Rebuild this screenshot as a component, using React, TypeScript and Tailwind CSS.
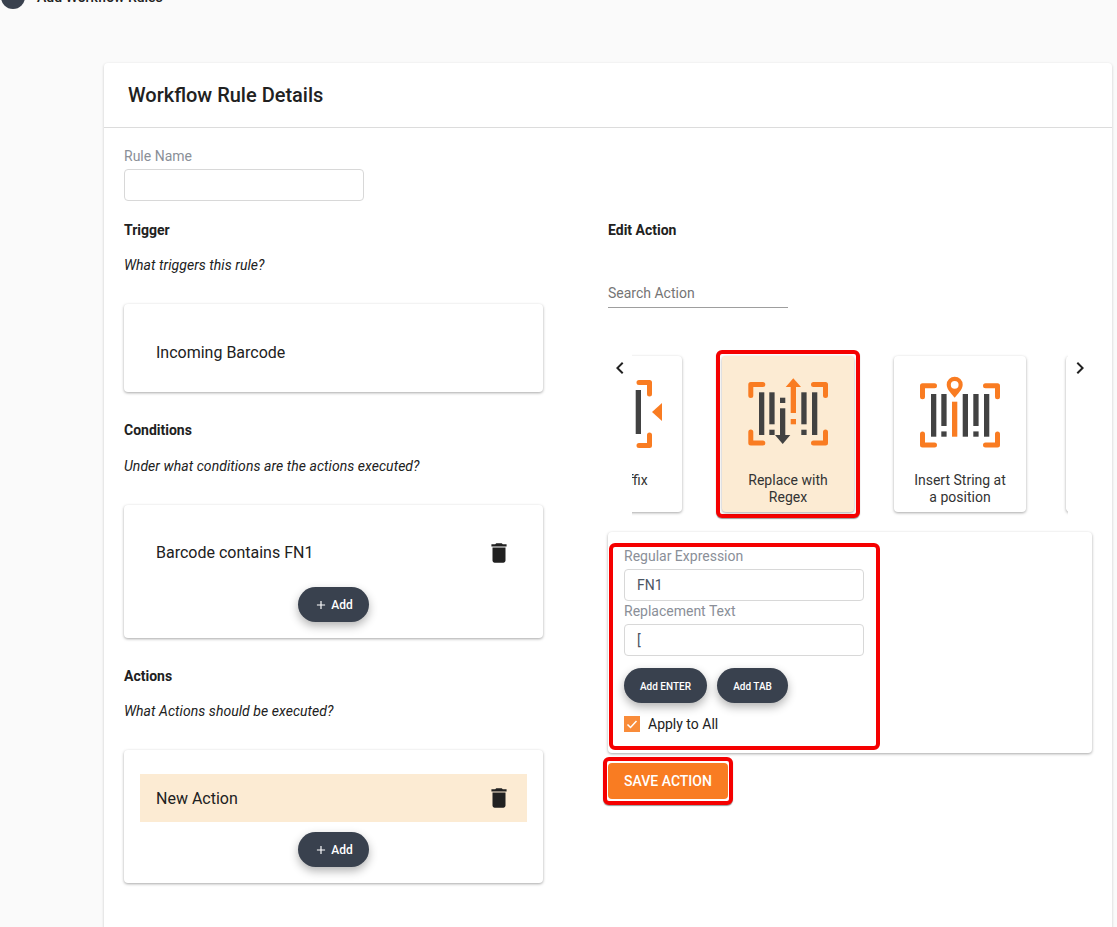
const ORANGE = "#f97c22";
const DARK = "#424242";

function TrashIcon() {
  return (
    <svg viewBox="0 0 24 24" className="h-[26px] w-[26px] shrink-0" fill="#212121">
      <path d="M6 19c0 1.1.9 2 2 2h8c1.1 0 2-.9 2-2V7H6v12zM19 4h-3.5l-1-1h-5l-1 1H5v2h14V4z" />
    </svg>
  );
}

function AddButton() {
  return (
    <div className="flex justify-center">
      <button className="flex h-[35px] w-[71px] items-center justify-center gap-[3px] rounded-full bg-[#39414e] text-xs font-medium text-white shadow-[0_4px_10px_rgba(0,0,0,0.3)]">
        <svg viewBox="0 0 24 24" className="h-[14px] w-[14px]" fill="#fff">
          <path d="M19 13h-6v6h-2v-6H5v-2h6V5h2v6h6v2z" />
        </svg>
        Add
      </button>
    </div>
  );
}

function Brackets({ l, r, t, b }: { l: number; r: number; t: number; b: number }) {
  return (
    <path
      d={`M${l + 12} ${t}H${l}V${t + 11}M${r - 12} ${t}H${r}V${t + 11}M${l} ${b - 11}V${b}H${l + 12}M${r} ${b - 11}V${b}H${r - 12}`}
      fill="none"
      stroke={ORANGE}
      strokeWidth="5"
      strokeLinecap="round"
      strokeLinejoin="round"
    />
  );
}

function RegexIcon() {
  return (
    <svg width="120" height="90" viewBox="0 0 120 90" className="ml-2 block">
      <Brackets l={20.8} r={95.5} t={19.5} b={78} />
      <g fill={DARK}>
        <rect x="29" y="27.3" width="5.3" height="42.7" />
        <rect x="39.3" y="27.3" width="5.3" height="32" />
        <rect x="39.3" y="64.7" width="5.3" height="5.3" />
        <rect x="50" y="32.7" width="5.3" height="5.3" />
        <rect x="50" y="43.3" width="5.3" height="27" />
        <path d="M45 70h15.3l-7.6 9z" />
        <rect x="71.3" y="27.3" width="5.3" height="32" />
        <rect x="71.3" y="64.7" width="5.3" height="5.3" />
        <rect x="82" y="27.3" width="5.3" height="42.7" />
      </g>
      <g fill={ORANGE}>
        <path d="M55.7 22l7.6-8.7L71 22z" />
        <rect x="60.7" y="22" width="5.3" height="26" />
        <rect x="60.7" y="54" width="5.3" height="5.3" />
      </g>
    </svg>
  );
}

function InsertIcon() {
  return (
    <svg width="110" height="90" viewBox="0 0 110 90" className="ml-[11px] block">
      <Brackets l={17.5} r={92.5} t={20.8} b={80} />
      <g fill={DARK}>
        <rect x="26" y="29" width="5.3" height="42.7" />
        <rect x="36.3" y="29" width="5.3" height="32" />
        <rect x="36.3" y="66.4" width="5.3" height="5.3" />
        <rect x="57.7" y="29" width="5.3" height="42.7" />
        <rect x="68.3" y="29" width="5.3" height="32" />
        <rect x="68.3" y="66.4" width="5.3" height="5.3" />
        <rect x="79" y="29" width="5.3" height="42.7" />
      </g>
      <rect x="47" y="36.7" width="5.3" height="35" fill={ORANGE} />
      <path
        fillRule="evenodd"
        fill={ORANGE}
        d="M49.7 11.7a8 8 0 0 0-8 8c0 5 5.5 9.5 8 13 2.5-3.5 8-8 8-13a8 8 0 0 0-8-8zm0 4.2a3.9 3.9 0 1 1 0 7.8 3.9 3.9 0 0 1 0-7.8z"
      />
    </svg>
  );
}

function SuffixIcon() {
  return (
    <svg width="132" height="90" viewBox="0 0 132 90" className="block">
      <path
        d="M89 25.5H99.5V37M99.5 78V88.5H89"
        transform="translate(0 -8)"
        fill="none"
        stroke={ORANGE}
        strokeWidth="5"
        strokeLinecap="round"
        strokeLinejoin="round"
      />
      <rect x="85.7" y="25" width="5.3" height="44" fill={DARK} />
      <path d="M102 47l10-9v18z" fill={ORANGE} />
    </svg>
  );
}

function ActionCard({
  label,
  active,
  icon,
}: {
  label: React.ReactNode;
  active?: boolean;
  icon?: React.ReactNode;
}) {
  return (
    <div
      className={`h-[156px] w-[132px] shrink-0 rounded pt-[9px] shadow-[0_1px_3px_rgba(0,0,0,0.35)] ${
        active ? "bg-[#fcebd3]" : "bg-white"
      }`}
    >
      {icon ?? <div className="h-[90px]" />}
      <p className="mt-[17px] px-2 text-center text-sm leading-[17px] text-[#333]">{label}</p>
    </div>
  );
}

function RuleCard({ children }: { children: React.ReactNode }) {
  return (
    <div className="mt-[29px] rounded bg-white px-4 pb-4 pt-6 shadow-[0_1px_3px_rgba(0,0,0,0.35)]">
      {children}
    </div>
  );
}

function Heading({
  title,
  sub,
  first,
  subTop = "mt-[15px]",
}: {
  title: string;
  sub: string;
  first?: boolean;
  subTop?: string;
}) {
  return (
    <>
      <h3 className={`text-sm font-bold text-[#212121] ${first ? "" : "mt-[28px]"}`}>{title}</h3>
      <p className={`${subTop} text-sm italic tracking-[0.05px] text-[#212121]`}>{sub}</p>
    </>
  );
}

function TextField({ label, value, top }: { label: string; value?: string; top?: string }) {
  return (
    <div className={top}>
      <label className="block text-sm text-[#8a8f98]">{label}</label>
      <input
        readOnly
        value={value ?? ""}
        className="mt-[3px] block h-8 w-60 rounded border border-[#d8d8d8] bg-white pl-3 text-sm text-[#4b5563] outline-none"
      />
    </div>
  );
}

export default function App() {
  return (
    <div
      className="h-[927px] overflow-hidden bg-[#fafafa] text-[#212121]"
      style={{ fontFamily: "Roboto, 'Liberation Sans', sans-serif" }}
    >
      {/* Page header, cut off by the top edge */}
      <div className="-mt-[15px] ml-px flex h-6 items-center gap-3">
        <div className="h-6 w-6 rounded-full bg-[#39414e]" />
        <span className="text-sm font-medium">Add Workflow Rules</span>
      </div>

      <section className="ml-[104px] mr-[5px] mt-[54px] h-[900px] rounded-t bg-white shadow-[0_1px_3px_rgba(0,0,0,0.2)]">
        <div className="flex h-[65px] items-center border-b border-[#dcdcdc] pl-6">
          <h2 className="text-xl font-medium text-[#212121]">Workflow Rule Details</h2>
        </div>

        <div className="px-5 pt-[18px]">
          <TextField label="Rule Name" />

          <div className="mt-[19px] flex">
            {/* Left column */}
            <div className="w-[419px] shrink-0">
              <Heading first title="Trigger" sub="What triggers this rule?" />
              <RuleCard>
                <div className="flex h-12 items-center px-4 pt-[2px]">Incoming Barcode</div>
              </RuleCard>

              <Heading
                title="Conditions"
                sub="Under what conditions are the actions executed?"
                subTop="mt-4"
              />
              <RuleCard>
                <div className="flex h-12 items-center justify-between pl-4 pr-[15px]">
                  Barcode contains FN1
                  <TrashIcon />
                </div>
                <div className="mt-[10px]">
                  <AddButton />
                </div>
              </RuleCard>

              <Heading title="Actions" sub="What Actions should be executed?" />
              <RuleCard>
                <div className="flex h-12 items-center justify-between bg-[#fcebd3] pl-4 pr-[15px]">
                  <span className="pt-[2px]">New Action</span>
                  <TrashIcon />
                </div>
                <div className="mt-[10px]">
                  <AddButton />
                </div>
              </RuleCard>
            </div>

            {/* Right column */}
            <div className="ml-[65px] w-[484px] shrink-0">
              <h3 className="text-sm font-bold text-[#212121]">Edit Action</h3>
              <input
                placeholder="Search Action"
                className="mt-[38px] block h-[30px] w-[180px] border-b border-[#9e9e9e] bg-transparent text-sm outline-none placeholder:text-[#757575]"
              />

              {/* Carousel */}
              <div className="mt-[37px] flex">
                <div className="w-6 shrink-0 pt-[11px]">
                  <svg viewBox="0 0 24 24" className="h-6 w-6" fill="#212121">
                    <path d="M15.41 7.41L14 6l-6 6 6 6 1.41-1.41L10.83 12z" />
                  </svg>
                </div>
                <div className="w-[436px] overflow-hidden pb-2 pt-[11px]">
                  <div className="-ml-[82px] flex gap-10">
                    <ActionCard label="Add Suffix" icon={<SuffixIcon />} />
                    <div className="-m-[6px] h-fit shrink-0 rounded-md border-4 border-[#f50000] bg-white p-[2px] shadow-[0_1px_1px_rgba(0,0,0,0.4)]">
                      <ActionCard active label={<>Replace with<br />Regex</>} icon={<RegexIcon />} />
                    </div>
                    <ActionCard label={<>Insert String at<br />a position</>} icon={<InsertIcon />} />
                    <ActionCard label="" />
                  </div>
                </div>
                <div className="w-6 shrink-0 pt-[11px]">
                  <svg viewBox="0 0 24 24" className="h-6 w-6" fill="#212121">
                    <path d="M10 6L8.59 7.41 13.17 12l-4.58 4.59L10 18l6-6z" />
                  </svg>
                </div>
              </div>

              {/* Action form */}
              <div className="mt-3 h-[221px] rounded bg-white pl-px pt-[11px] shadow-[0_1px_3px_rgba(0,0,0,0.35)]">
                <div className="h-[207px] w-[271px] rounded-md border-4 border-[#f50000] pl-[11px]">
                  <TextField top="-mt-px" label="Regular Expression" value="FN1" />
                  <TextField label="Replacement Text" value="[" />
                  <div className="mt-3 flex gap-[10px]">
                    <button className="h-[35px] w-[83px] rounded-full bg-[#39414e] pt-px text-[10px] font-medium text-white shadow-[0_4px_10px_rgba(0,0,0,0.3)]">
                      Add ENTER
                    </button>
                    <button className="h-[35px] w-[71px] rounded-full bg-[#39414e] pt-px text-[10px] font-medium text-white shadow-[0_4px_10px_rgba(0,0,0,0.3)]">
                      Add TAB
                    </button>
                  </div>
                  <label className="mt-[11px] flex items-center gap-2 text-sm">
                    <span className="flex h-4 w-4 items-center justify-center bg-[#f98c3a]">
                      <svg viewBox="0 0 16 16" className="h-4 w-4" fill="none" stroke="#fff" strokeWidth="1.5">
                        <path d="M3.5 8.5l3 3 6-6.5" />
                      </svg>
                    </span>
                    Apply to All
                  </label>
                </div>
              </div>

              <div className="-ml-[5px] mt-1 w-fit rounded-md border-4 border-[#f50000] bg-white px-px py-[2px] shadow-[0_1px_1px_rgba(0,0,0,0.4)]">
                <button className="block h-9 w-[120px] rounded bg-[#f97c22] pb-px text-sm font-medium uppercase text-white">
                  Save Action
                </button>
              </div>
            </div>
          </div>
        </div>
      </section>
    </div>
  );
}
